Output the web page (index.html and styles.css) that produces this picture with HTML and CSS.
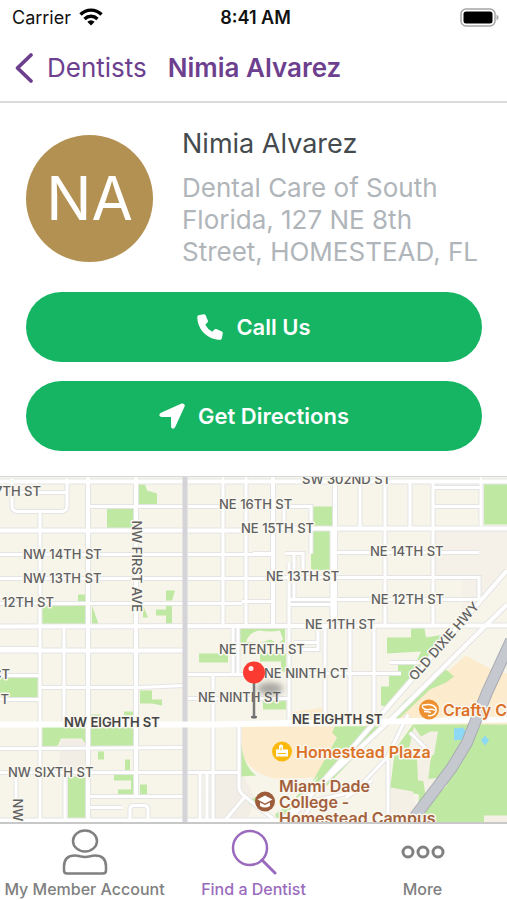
FILE: index.html
```
<!DOCTYPE html>
<html lang="en">
<head>
    <meta charset="UTF-8">
    <meta name="viewport" content="width=device-width, initial-scale=1.0">
    <title>Nimia Alvarez</title>
    <link rel="stylesheet" href="styles.css">
</head>
<body>
    <div class="status-bar">
        <span class="carrier">Carrier
            <svg width="24" height="18" viewBox="0 0 24 18" aria-hidden="true">
                <g fill="none" stroke="#000" stroke-width="3.400">
                    <path d="M1.5 6.5C7.5 .6 16.500 .6 22.500 6.500"/>
                    <path d="M5.500 10.900C9.300 7.300 14.700 7.300 18.500 10.900"/>
                </g>
                <path d="M8.300 13.700q3.700-3 7.400 0L12 17.500z"/>
            </svg>
        </span>
        <span class="time">8:41 AM</span>
        <span class="battery">
            <svg width="39" height="19" viewBox="0 0 39 19" aria-hidden="true">
                <rect x="1" y="1" width="34" height="17" rx="5" fill="#fff" stroke="#a5a5a5" stroke-width="1.500"/>
                <rect x="3.500" y="3.500" width="29" height="12" rx="2.500"/>
                <path d="M36.500 6.500q2 1 2 3t-2 3z" fill="#a5a5a5"/>
            </svg>
        </span>
    </div>

    <header class="nav-bar">
        <a class="back" href="#">
            <svg width="20" height="32" viewBox="0 0 20 32" aria-hidden="true">
                <path d="M17 3L3.500 16 17 29" fill="none" stroke="currentColor" stroke-width="3.800" stroke-linecap="round" stroke-linejoin="round"/>
            </svg>
            Dentists
        </a>
        <h1>Nimia Alvarez</h1>
    </header>

    <main>
        <section class="profile">
            <div class="avatar">NA</div>
            <div class="details">
                <h2>Nimia Alvarez</h2>
                <p>Dental Care of South Florida, 127 NE 8th Street, HOMESTEAD, FL</p>
            </div>
        </section>

        <div class="actions">
            <button type="button">
                <svg width="26" height="26" viewBox="0 0 26 26" aria-hidden="true">
                    <path fill="currentColor" d="M1.500 1.200L6.800.2q1.200-.2 1.700.9l2.400 5.600q.4 1.100-.5 1.900L8.300 10.700q2.300 4.700 7 7l2.100-2.100q.8-.9 1.900-.5l5.600 2.400q1.100.5.900 1.700l-1 5.300q-.3 1.200-1.500 1.200C10.500 25.700.3 15.500.3 2.700q0-1.200 1.200-1.500z"/>
                </svg>
                Call Us
            </button>
            <button type="button">
                <svg width="26" height="26" viewBox="0 0 26 26" aria-hidden="true">
                    <path fill="currentColor" d="M22.600.4L2 9.800Q0 10.900.4 12.600q.4 1.300 2.200 1.300l9.400.1.100 9.400q0 1.800 1.300 2.200 1.700.4 2.800-1.600L25.600 3.400Q26.400.1 22.600.4z"/>
                </svg>
                Get Directions
            </button>
        </div>

        <svg class="map" viewBox="0 0 507 346" preserveAspectRatio="xMidYMid slice" role="img" aria-label="Map of Homestead">
            <defs>
                <filter id="soft" x="-50%" y="-50%" width="200%" height="200%"><feGaussianBlur stdDeviation="3"/></filter>
                <!-- street network, stroked twice: casing, then white -->
                <g id="streets">
                    <!-- west of the railway -->
                    <path d="M12 2v27q0 6 6 6h43q6 0 6-6V2M12 16h55M40 36v310M64 150v98M65 296v50M16 296v50"/>
                    <path d="M88 30h97M0 78h273M0 102h273M0 127h242M0 172h40M0 199h40M40 211h100L185 209M0 223h40M0 272h40L185 271M0 296h240M88 320h97M88 331h34M130 346v-14q0-3 4-3h10q4 0 4 4v13"/>
                    <!-- centre -->
                    <path d="M223 0v150M246 0v150M188 30h35M233 150v48M238 150v48M188 198h60M188 222h102M213 198v148M200 296v50M207 296v50M239 248v62q0 6 6 10l12 10 16 12M245 320l-20 24"/>
                    <path d="M273 30h38v47M284 30v22M253 77h20M285 77h18v18M294 77v45M289 86v41M332 52v98M242 125h31M289 123h190M335 128h-46v120"/>
                    <path d="M318 149v24h-20M325 149v96M350 149v96M374 149v92M294 166h24M289 197h112M390 186h40"/>
                    <!-- north east -->
                    <path d="M360 5v47M385 5v145M410 5v47M433 5v145M481 0v50M433 11h48M433 30h48M335 76h144M273 101h206v22"/>
                    <!-- campus roads -->
                    <path d="M408 238l-20 41v68M388 280l-33 35-40 9-12 17M372 304l-26 17M410 256l15 15-6 10"/>
                </g>
                <g id="avenues">
                    <path d="M0 5h507M0 54h257M263 52h244M0 150l507-1M0 174h185M136 0v319M273 0v150M335 0v150M88 0v346M0 344h290"/>
                    <path d="M507 94L287 346M507 128L396 238 280 346"/>
                </g>
            </defs>

            <rect width="507" height="346" fill="#f7f5ea"/>
            <path d="M433 52h74v40l-45 50V101h-29z" fill="#f5f1e8"/>
            <path d="M213 298h30l12 24-8 22h-34zM61 263h22l5 6v28H58z" fill="#f3eee5"/>

            <!-- commercial areas -->
            <g fill="#fdebce">
                <path d="M242 250h100l-26 51-42 1q-32-9-32-32z"/>
                <path d="M290 236l33-5v16h-33z"/>
                <path d="M466 179l22 12 19 6v51H386z"/>
            </g>

            <!-- parks -->
            <g fill="#bfe8a2">
                <path d="M139 8h6l2 6 10 3v11h-18zM107 32h27v20h-27zM78 118h7v7h-7zM42 129h44v20H42zM92 129l7 20h-7zM143 129l5 12h-5zM166 114h9l-3 10h-6zM156 133h10v-5h6v20h-6v-9h-10z"/>
                <path d="M240 152h45v14h-25l-20 2zM311 30h22v22h-22zM313 54h20v40l-22-1V77h2zM484 3h23v45h-23z"/>
                <path d="M0 201h38v20H0zM42 249h44v19l-4-6H61l-3 7-16 2zM91 250h45v20H91zM140 214h12v9h10v6l-10-2h-12zM199 177h29v9h-29zM124 235h9v4h-9zM91 238h10v3H91z"/>
                <path d="M68 300h20v43H68zM98 275h6v8h-6zM125 283h5v11h-5zM114 298h22v20h-18v-5h13v-9h-17zM140 308h7v10h-7zM241 265q2 24 15 34l-15 1zM260 177h26v18h-5v-10h-21zM263 222h23v11h-23zM248 326l8-6v12z"/>
                <path d="M387 161h24v-12h13l2 12 18-3-20 27-23 26-15 19-5-1v-19h8v-12h9v-10h17l6-13-34 2z"/>
                <path d="M446 193l8 7-8 6-16 7-34 32-8-2 18-20z"/>
                <path d="M342 250h-7l-3 6 5 5-25 45-16 14 1 26h-19l-3-8 28-21 18-21 48-46z"/>
                <path d="M413 248h94v98h-90l2-28-29-5 5-40z"/>
                <path d="M344 250h40l-57 59-18 8z"/>
            </g>
            <path d="M246 165q4-10 14-11 10 2 20 0l3 9-5 4-8-4q-10 5-24 2z" fill="#f7f5ea"/>
            <path d="M414 250l7 10 9-5h8l-4 23-3 2-3 25-10-1-1-22-8-10zM423 303l20-2 4 8-20 19zM391 311l22 4 4 20-4 11h-25zM484 339h23v7h-23z" fill="#f4f0e6"/>
            <path d="M454 252l9-1 4 5-4 7-9 1z" fill="#8cd8f5"/>
            <path d="M481 264l4-5 4 5-4 5z" fill="#8cd8f5"/>

            <use href="#streets" class="casing"/>
            <use href="#avenues" class="casing casing-wide"/>
            <use href="#streets" class="road"/>
            <use href="#avenues" class="road road-wide"/>
            <path class="rail" d="M185 0v346"/>
            <path class="road eighth" d="M0 248h210L507 243"/>
            <path class="turnpike-edge" d="M511 164L487 216l-20 50-15 25-40 53"/>
            <path class="turnpike" d="M511 164L487 216l-20 50-15 25-40 53"/>

            <g class="street">
                <text x="-5" y="19">7TH ST</text>
                <text x="302" y="7">SW 302ND ST</text>
                <text x="219" y="32">NE 16TH ST</text>
                <text x="241" y="56">NE 15TH ST</text>
                <text x="23" y="82">NW 14TH ST</text>
                <text x="23" y="106">NW 13TH ST</text>
                <text x="2" y="130">12TH ST</text>
                <text x="370" y="79">NE 14TH ST</text>
                <text x="266" y="104">NE 13TH ST</text>
                <text x="371" y="127">NE 12TH ST</text>
                <text x="305" y="152">NE 11TH ST</text>
                <text x="219" y="177">NE TENTH ST</text>
                <text x="264" y="201">NE NINTH CT</text>
                <text x="198" y="225">NE NINTH ST</text>
                <text x="-8" y="202">CT</text>
                <text x="-8" y="227">ST</text>
                <text x="8" y="300">NW SIXTH ST</text>
                <text transform="translate(132 44) rotate(90)">NW FIRST AVE</text>
                <text transform="translate(13 322) rotate(90)">NW</text>
                <text transform="translate(415 205) rotate(-49)">OLD DIXIE HWY</text>
            </g>
            <g class="street major">
                <text x="64" y="250">NW EIGHTH ST</text>
                <text x="292" y="247">NE EIGHTH ST</text>
            </g>

            <g class="poi">
                <circle cx="429" cy="233" r="10" fill="#ee9231"/>
                <path d="M422 229q7-2 11 0 4 2 3 6-2 5-8 4M422 230q2 4 7 3 4-1 6 1M424 235q4 0 7 1" fill="none" stroke="#fff" stroke-width="1.500"/>
                <text x="443" y="239" fill="#dc7128">Crafty Crab</text>

                <circle cx="282" cy="275" r="10" fill="#fbb80f"/>
                <path d="M276 273h3v-3q0-2 2-2t2 2v3h5v7h-12z" fill="#fff"/>
                <path d="M278 277h8M281 271v3" stroke="#fbb80f" stroke-width="1" fill="none"/>
                <text x="296" y="281" fill="#dc7128">Homestead Plaza</text>

                <circle cx="265" cy="325" r="10" fill="#9d5d3c"/>
                <path d="M257.500 323l7.500-4 7.500 4-7.500 4zM260 326l5 2.500 5-2.500v3.500q-5 3-10 0z" fill="#fff"/>
                <text fill="#a3603c">
                    <tspan x="279" y="315">Miami Dade</tspan>
                    <tspan x="279" y="331">College -</tspan>
                    <tspan x="279" y="347">Homestead Campus</tspan>
                </text>
            </g>

            <!-- pin -->
            <ellipse cx="270" cy="212" rx="13" ry="6" fill="#555" opacity=".5" filter="url(#soft)"/>
            <ellipse cx="254" cy="240.500" rx="3" ry="1.500" fill="#666"/>
            <path d="M254 204v37" stroke="#777" stroke-width="2.500"/>
            <circle cx="254" cy="196" r="11" fill="#fb3b31"/>
            <circle cx="251" cy="192" r="2.500" fill="#fff" opacity=".9"/>
        </svg>
    </main>

    <nav class="tab-bar">
        <a href="#">
            <svg width="46" height="48" viewBox="0 0 46 48" aria-hidden="true">
                <g fill="none" stroke="currentColor" stroke-width="2.500" stroke-linejoin="round">
                    <ellipse cx="23" cy="12" rx="12" ry="10.500"/>
                    <path d="M5 44.500h36q3 0 3-3v-4q0-11-11-11-2 0-5 .8-5 1.200-10 0-3-.8-5-.8-11 0-11 11v4q0 3 3 3z"/>
                </g>
            </svg>
            My Member Account
        </a>
        <a href="#" class="active">
            <svg width="46" height="48" viewBox="0 0 46 48" aria-hidden="true">
                <g fill="none" stroke="currentColor" stroke-width="2.500" stroke-linecap="round">
                    <circle cx="19" cy="19" r="17"/>
                    <path d="M31 31l13 13" stroke-width="3"/>
                </g>
            </svg>
            Find a Dentist
        </a>
        <a href="#">
            <svg width="46" height="48" viewBox="0 0 46 48" aria-hidden="true">
                <g fill="none" stroke="currentColor" stroke-width="3">
                    <circle cx="8" cy="23" r="5"/>
                    <circle cx="23" cy="23" r="5"/>
                    <circle cx="38" cy="23" r="5"/>
                </g>
            </svg>
            More
        </a>
    </nav>
</body>
</html>
```
FILE: styles.css
```
* {
    box-sizing: border-box;
}

body {
    margin: 0;
    height: 100vh;
    display: flex;
    flex-direction: column;
    background-color: #fff;
    color: #444a4e;
    font-family: Inter, "Liberation Sans", sans-serif;
}

h1, h2, p {
    margin: 0;
}

a {
    color: inherit;
    text-decoration: none;
}

svg {
    display: block;
    flex-shrink: 0;
}

.status-bar {
    display: grid;
    grid-template-columns: 1fr auto 1fr;
    align-items: center;
    height: 34px;
    padding: 0 8px 0 12px;
    color: #111;
    font-size: 18px;
}

.carrier {
    display: flex;
    align-items: center;
    gap: 8px;
}

.time {
    font-weight: 600;
}

.battery {
    justify-self: end;
}

.nav-bar {
    display: flex;
    align-items: center;
    gap: 21px;
    height: 69px;
    padding: 0 14px;
    border-bottom: 2px solid #dcdcdc;
    color: #6d3f8f;
    font-size: 26px;
}

.nav-bar h1 {
    font-size: 26px;
    font-weight: 600;
}

.back {
    display: flex;
    align-items: center;
    gap: 13px;
}

main {
    flex: 1;
    min-height: 0;
    display: flex;
    flex-direction: column;
}

.profile {
    display: flex;
    align-items: center;
    gap: 29px;
    padding: 25px 24px 24px 26px;
}

.avatar {
    flex: none;
    display: flex;
    align-items: center;
    justify-content: center;
    width: 127px;
    height: 127px;
    border-radius: 50%;
    background-color: #b39152;
    color: #fff;
    font-size: 60px;
}

.details {
    font-size: 26px;
    line-height: 32px;
}

.details h2 {
    margin-bottom: 12px;
    font-size: 27px;
    font-weight: 400;
}

.details p {
    color: #b0b5ba;
}

.actions {
    display: flex;
    flex-direction: column;
    gap: 19px;
    padding: 0 25px 25px 26px;
}

.actions button {
    display: flex;
    align-items: center;
    justify-content: center;
    gap: 13px;
    height: 70px;
    border: none;
    border-radius: 35px;
    background-color: #15b564;
    color: #fff;
    font-family: inherit;
    font-size: 22px;
    font-weight: 600;
    cursor: pointer;
}

.map {
    flex: 1 1 0;
    width: 100%;
    min-height: 0;
    border-top: 1px solid #d8d8d8;
}

.casing,
.road,
.rail,
.turnpike,
.turnpike-edge {
    fill: none;
}

.casing {
    stroke: #e4e4e4;
    stroke-width: 5px;
}

.casing-wide {
    stroke-width: 6px;
}

.road {
    stroke: #fff;
    stroke-width: 3px;
}

.road-wide {
    stroke-width: 4px;
}

.eighth {
    stroke-width: 6px;
}

.rail {
    stroke: #d3d3d8;
    stroke-width: 5px;
}

.turnpike-edge {
    stroke: #a9acb2;
    stroke-width: 12px;
}

.turnpike {
    stroke: #c5c8ce;
    stroke-width: 10px;
}

.street text,
.poi text {
    stroke: #f9f7ee;
    stroke-width: 3px;
    stroke-linejoin: round;
    paint-order: stroke;
}

.street {
    fill: #5f6061;
    font-size: 13px;
    font-weight: 500;
}

.major {
    fill: #444;
    font-weight: 600;
}

.poi {
    font-size: 16px;
    font-weight: 600;
}

.tab-bar {
    display: grid;
    grid-template-columns: repeat(3, 1fr);
    height: 78px;
    border-top: 2px solid #c8c8c8;
    background-color: #fff;
    color: #808080;
    font-size: 16px;
    font-weight: 500;
}

.tab-bar a {
    display: flex;
    flex-direction: column;
    align-items: center;
    gap: 3px;
    padding-top: 5px;
    line-height: 18px;
    white-space: nowrap;
}

.tab-bar .active {
    color: #9a6bbd;
}
```
